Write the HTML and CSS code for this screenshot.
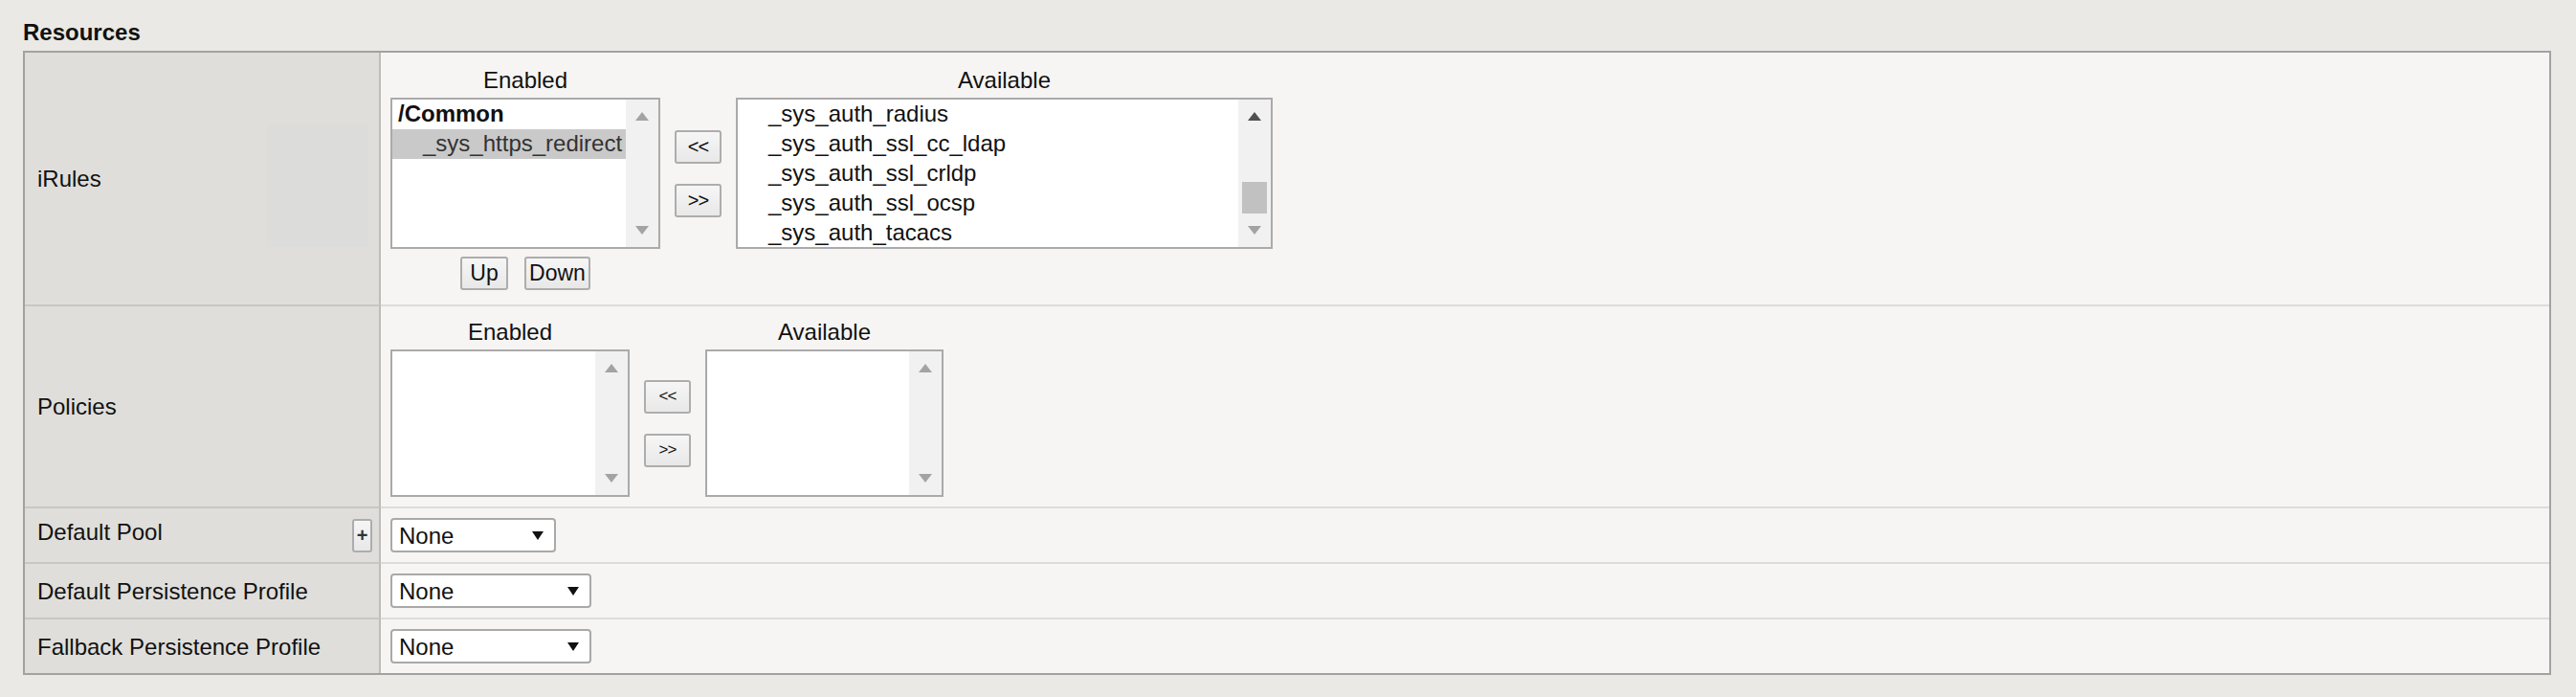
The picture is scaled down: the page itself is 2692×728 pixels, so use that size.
FILE: index.html
```html
<!DOCTYPE html>
<html>
<head>
<meta charset="utf-8">
<title>Resources</title>
<link rel="stylesheet" href="styles.css">
</head>
<body>
<div class="page">
  <h2 class="section-title">Resources</h2>
  <div class="props">

    <div class="row row-irules">
      <div class="label label-irules">iRules</div>
      <div class="value value-irules">
        <div class="duallist">
          <div class="dl-head">Enabled</div>
          <div></div>
          <div class="dl-head">Available</div>

          <div class="listbox lb-ir-en">
            <div class="lb-items">
              <div class="opt-group">/Common</div>
              <div class="opt selected">_sys_https_redirect</div>
            </div>
            <div class="sb">
              <div class="sb-btn"><span class="tri-up"></span></div>
              <div class="sb-track"></div>
              <div class="sb-btn"><span class="tri-down"></span></div>
            </div>
          </div>

          <div class="mover">
            <button class="btn btn-move">&lt;&lt;</button>
            <button class="btn btn-move">&gt;&gt;</button>
          </div>

          <div class="listbox lb-ir-av">
            <div class="lb-items">
              <div class="opt">_sys_auth_radius</div>
              <div class="opt">_sys_auth_ssl_cc_ldap</div>
              <div class="opt">_sys_auth_ssl_crldp</div>
              <div class="opt">_sys_auth_ssl_ocsp</div>
              <div class="opt">_sys_auth_tacacs</div>
            </div>
            <div class="sb">
              <div class="sb-btn"><span class="tri-up active"></span></div>
              <div class="sb-track end"><div class="sb-thumb"></div></div>
              <div class="sb-btn"><span class="tri-down"></span></div>
            </div>
          </div>

          <div class="order-btns">
            <button class="btn btn-up">Up</button>
            <button class="btn btn-down">Down</button>
          </div>
        </div>
      </div>
    </div>

    <div class="row row-policies">
      <div class="label">Policies</div>
      <div class="value value-policies">
        <div class="duallist">
          <div class="dl-head">Enabled</div>
          <div></div>
          <div class="dl-head">Available</div>

          <div class="listbox lb-po-en">
            <div class="lb-items"></div>
            <div class="sb">
              <div class="sb-btn"><span class="tri-up"></span></div>
              <div class="sb-track"></div>
              <div class="sb-btn"><span class="tri-down"></span></div>
            </div>
          </div>

          <div class="mover">
            <button class="btn btn-move small">&lt;&lt;</button>
            <button class="btn btn-move small">&gt;&gt;</button>
          </div>

          <div class="listbox lb-po-av">
            <div class="lb-items"></div>
            <div class="sb">
              <div class="sb-btn"><span class="tri-up"></span></div>
              <div class="sb-track"></div>
              <div class="sb-btn"><span class="tri-down"></span></div>
            </div>
          </div>
        </div>
      </div>
    </div>

    <div class="row row-small">
      <div class="label label-pool">
        <span>Default Pool</span>
        <button class="btn btn-plus">+</button>
      </div>
      <div class="value value-small">
        <div class="select sel-pool"><span class="sel-text">None</span><span class="sel-arrow"></span></div>
      </div>
    </div>

    <div class="row row-small">
      <div class="label">Default Persistence Profile</div>
      <div class="value value-small">
        <div class="select sel-wide"><span class="sel-text">None</span><span class="sel-arrow"></span></div>
      </div>
    </div>

    <div class="row row-small">
      <div class="label">Fallback Persistence Profile</div>
      <div class="value value-small">
        <div class="select sel-wide"><span class="sel-text">None</span><span class="sel-arrow"></span></div>
      </div>
    </div>

  </div>
</div>
</body>
</html>
```
FILE: styles.css
```css
* { box-sizing: border-box; }

html, body {
  margin: 0;
  padding: 0;
}

body {
  width: 2692px;
  height: 728px;
  overflow: hidden;
  background: #eae9e5;
  font-family: "Liberation Sans", Arial, sans-serif;
  font-size: 24px;
  color: #111;
}

.page {
  padding: 20px 26px 0 24px;
}

.section-title {
  margin: 0 0 6px 0;
  font-size: 24px;
  line-height: 27px;
  font-weight: bold;
  color: #111;
}

.props {
  border: 2px solid #a2a2a2;
  background: #f6f5f3;
}

.row {
  display: flex;
}

.label {
  width: 372px;
  flex: none;
  display: flex;
  align-items: center;
  padding: 0 7px 0 13px;
  background: #dfdedb;
  border-right: 2px solid #bdbcba;
  line-height: 27px;
  white-space: nowrap;
}

.label-irules {
  background: linear-gradient(#dcdcdb, #dcdcdb) no-repeat 253px 75px / 105px 128px, #dfdedb;
}

.label-pool {
  align-items: flex-start;
  padding-top: 11px;
}

.value {
  flex: 1;
  background: #f6f5f3;
  padding-left: 10px;
}

.row + .row .label {
  border-top: 2px solid #c8c7c5;
}

.row + .row .value {
  border-top: 2px solid #dddcda;
}

.value-irules {
  padding-top: 15px;
  padding-bottom: 15px;
}

.value-policies {
  padding-top: 13px;
  padding-bottom: 10px;
}

.value-small {
  padding-top: 10px;
  padding-bottom: 10px;
}

/* dual list */
.duallist {
  display: grid;
  grid-template-columns: auto auto auto;
  column-gap: 15px;
  justify-content: start;
}

.dl-head {
  text-align: center;
  line-height: 27px;
  margin-bottom: 5px;
}

.listbox {
  display: flex;
  background: #fff;
  border: 2px solid #aaaaaa;
}

.lb-ir-en { width: 282px; height: 158px; }
.lb-ir-av { width: 561px; height: 158px; }
.lb-po-en { width: 250px; height: 154px; }
.lb-po-av { width: 249px; height: 154px; }

.lb-items {
  flex: 1;
  overflow: hidden;
  min-width: 0;
}

.opt-group,
.opt {
  height: 31px;
  line-height: 29px;
  white-space: nowrap;
  overflow: hidden;
}

.opt-group {
  font-weight: bold;
  padding-left: 6px;
}

.opt {
  padding-left: 32px;
}

.opt.selected {
  background: #c9c9c9;
  color: #333;
}

.sb {
  width: 34px;
  flex: none;
  display: flex;
  flex-direction: column;
  background: #f1f1f1;
}

.sb-btn {
  height: 35px;
  flex: none;
  display: flex;
  align-items: center;
  justify-content: center;
}

.sb-track {
  flex: 1;
  display: flex;
  flex-direction: column;
  justify-content: flex-end;
  padding: 0 4px;
}

.sb-thumb {
  height: 33px;
  background: #c1c1c1;
}

.tri-up {
  width: 0;
  height: 0;
  border-left: 7px solid transparent;
  border-right: 7px solid transparent;
  border-bottom: 9px solid #a3a3a3;
}

.tri-up.active {
  border-bottom-color: #505050;
}

.tri-down {
  width: 0;
  height: 0;
  border-left: 7px solid transparent;
  border-right: 7px solid transparent;
  border-top: 9px solid #a3a3a3;
}

.mover {
  align-self: center;
  display: flex;
  flex-direction: column;
  gap: 21px;
}

.btn {
  font-family: "Liberation Sans", Arial, sans-serif;
  color: #111;
  background: linear-gradient(#f6f6f6, #e8e8e8);
  border: 2px solid #adadad;
  border-radius: 3px;
  padding: 0;
  margin: 0;
  height: 35px;
  display: flex;
  align-items: center;
  justify-content: center;
}

.btn-move {
  width: 49px;
  font-size: 20px;
  letter-spacing: -1px;
}

.btn-move.small {
  font-size: 17px;
}

.order-btns {
  grid-column: 1;
  display: flex;
  justify-content: center;
  gap: 17px;
  margin-top: 8px;
}

.btn-up {
  width: 50px;
  font-size: 23px;
}

.btn-down {
  width: 69px;
  font-size: 23px;
}

.btn-plus {
  margin-left: auto;
  width: 21px;
  font-size: 20px;
  font-weight: bold;
  color: #333;
}

/* selects */
.select {
  display: flex;
  align-items: center;
  justify-content: space-between;
  height: 36px;
  background: #fff;
  border: 2px solid #a9a9a9;
  border-radius: 4px;
  padding: 0 11px 0 7px;
}

.sel-pool { width: 173px; }
.sel-wide { width: 210px; }

.sel-text {
  line-height: 27px;
}

.sel-arrow {
  width: 0;
  height: 0;
  border-left: 6px solid transparent;
  border-right: 6px solid transparent;
  border-top: 9px solid #111;
}
```
